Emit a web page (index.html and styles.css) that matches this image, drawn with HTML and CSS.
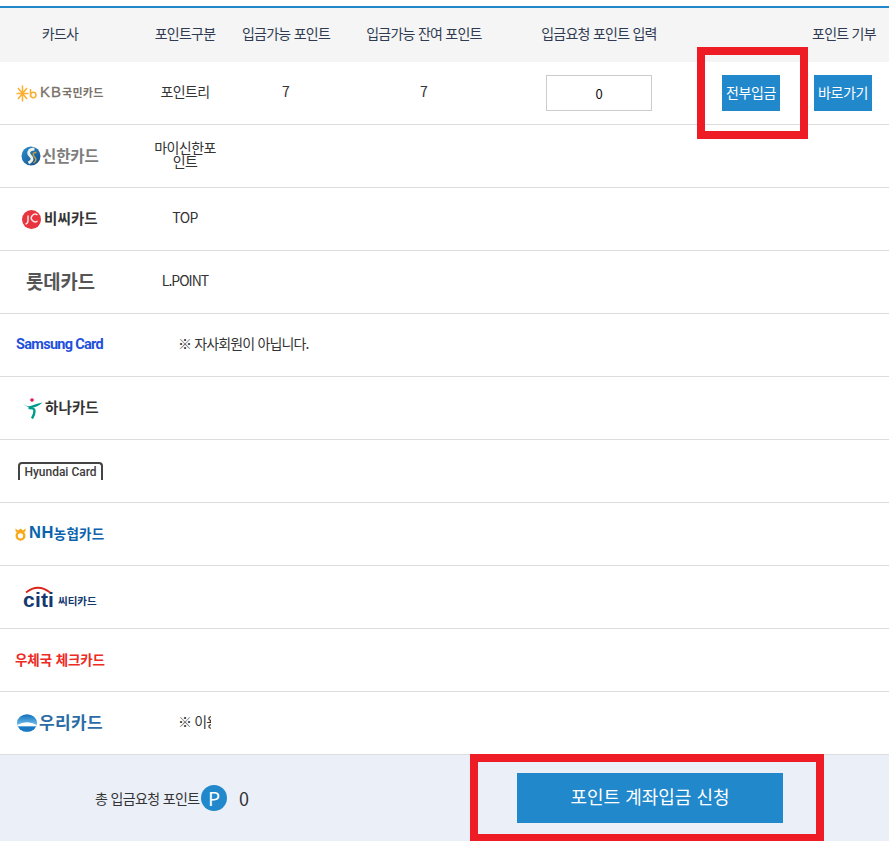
FILE: index.html
```html
<!DOCTYPE html>
<html lang="ko">
<head>
<meta charset="utf-8">
<title>포인트 계좌입금</title>
<link rel="stylesheet" href="styles.css">
</head>
<body>
<div class="page">
  <div class="row head">
    <div class="cell center">카드사</div>
    <div class="cell center">포인트구분</div>
    <div class="cell center wide">입금가능 포인트</div>
    <div class="cell center">입금가능 잔여 포인트</div>
    <div class="cell center">입금요청 포인트 입력</div>
    <div class="cell"></div>
    <div class="cell head-last">포인트 기부</div>
  </div>

  <div class="row">
    <div class="logo l-kb">
      <svg class="ic" width="21" height="17" viewBox="0 0 21 17"><path d="M6.500 0.500V16.500M0.500 8.500H12.500M2 3L11 14M11 3L2 14" stroke="#fbb034" stroke-width="1.500" fill="none"/><path d="M14.500 4V12" stroke="#fbb034" stroke-width="1.500" fill="none"/><circle cx="17.300" cy="10" r="2.700" fill="none" stroke="#fbb034" stroke-width="1.500"/></svg>
      <span class="kb-en">KB</span><span class="kb-ko">국민카드</span>
    </div>
    <div class="cell center type">포인트리</div>
    <div class="cell center num wide">7</div>
    <div class="cell center num">7</div>
    <div class="cell center"><input class="amount" type="text" value="0"></div>
    <div class="cell btn-a"><button class="btn">전부입금</button></div>
    <div class="cell btn-b"><button class="btn">바로가기</button></div>
  </div>

  <div class="row">
    <div class="logo l-sh">
      <svg class="ic" width="20" height="20" viewBox="0 0 20 20"><defs><linearGradient id="shg" x1="0" y1="0" x2="1" y2="1"><stop offset="0" stop-color="#2f8fd0"/><stop offset="1" stop-color="#0f4c86"/></linearGradient></defs><circle cx="10" cy="10" r="9.500" fill="url(#shg)"/><path d="M13.500 3C7.500 3 6.500 7 9 9.500S12.500 14 7.500 17" fill="none" stroke="#eef1e6" stroke-width="2.800"/><path d="M15.500 6.500C11.500 6 11.500 9 13.500 11S15.500 15 12.500 17" fill="none" stroke="#c09c4b" stroke-width="1.500"/></svg>
      <span>신한카드</span>
    </div>
    <div class="cell center type"><span class="wrap">마이신한포인트</span></div>
  </div>

  <div class="row">
    <div class="logo l-bc">
      <svg class="ic" width="19" height="19" viewBox="0 0 19 19"><circle cx="9.500" cy="9.500" r="9.500" fill="#e8343f"/><path d="M15.500 5A3.800 3.800 0 1 0 15.500 11" fill="none" stroke="#fbe3e3" stroke-width="1.500"/><path d="M6 5.500V10.500Q6 13.500 3.500 14" fill="none" stroke="#fbe3e3" stroke-width="1.500"/></svg>
      <span>비씨카드</span>
    </div>
    <div class="cell center type">TOP</div>
  </div>

  <div class="row">
    <div class="logo l-lotte"><span>롯데카드</span></div>
    <div class="cell center type latin">L.POINT</div>
  </div>

  <div class="row">
    <div class="logo l-ss"><span>Samsung Card</span></div>
    <div class="cell notice">※ 자사회원이 아닙니다.</div>
  </div>

  <div class="row">
    <div class="logo l-hana">
      <svg class="ic" width="21" height="21" viewBox="0 0 21 21"><circle cx="10" cy="2" r="1.800" fill="#e3165b"/><path d="M0.500 5.500Q5 9.500 10 7.500T20.500 4.500Q15 9.500 10 9.500T0.500 5.500Z" fill="#009b8c"/><path d="M6.500 10Q12.500 9.500 12.500 13T10 20.500" fill="none" stroke="#009b8c" stroke-width="2.400"/></svg>
      <span>하나카드</span>
    </div>
  </div>

  <div class="row">
    <div class="logo l-hd"><span>Hyundai Card</span></div>
  </div>

  <div class="row">
    <div class="logo l-nh">
      <svg class="ic" width="11" height="13" viewBox="0 0 11 13"><path d="M0.500 0.500L3 2.500L5.500 0.500L8 2.500L10.500 0.500V3L9 4.500H2L0.500 3Z" fill="#f9a81a"/><circle cx="5.500" cy="7.800" r="3.800" fill="none" stroke="#f9a81a" stroke-width="2.400"/></svg>
      <span class="nh-en">NH</span><span class="nh-ko">농협카드</span>
    </div>
  </div>

  <div class="row">
    <div class="logo l-citi">
      <span class="citi-wrap"><svg class="citi-arc" width="26" height="7" viewBox="0 0 26 7"><path d="M1 6.500Q13 -3 25 6.500" fill="none" stroke="#d9261c" stroke-width="1.800"/></svg><span class="citi-en">citi</span></span><span class="citi-ko">씨티카드</span>
    </div>
  </div>

  <div class="row">
    <div class="logo l-post"><span>우체국 체크카드</span></div>
  </div>

  <div class="row">
    <div class="logo l-woori">
      <svg class="ic" width="20" height="18" viewBox="0 0 20 18"><defs><clipPath id="wc"><ellipse cx="10" cy="9" rx="10" ry="8.800"/></clipPath><linearGradient id="wg" x1="0" y1="0" x2="0" y2="1"><stop offset="0" stop-color="#0e6db8"/><stop offset="0.500" stop-color="#5fb0e4"/></linearGradient></defs><g clip-path="url(#wc)"><rect width="20" height="18" fill="url(#wg)"/><path d="M0 11Q10 5.500 20 11V12.500H0Z" fill="#fff"/><path d="M0 12.500H20V18H0Z" fill="#1b78c2"/></g></svg>
      <span>우리카드</span>
    </div>
    <div class="cell"><div class="notice clip">※ 이용</div></div>
  </div>

  <div class="total">
    <div class="sum">
      <span class="sum-label">총 입금요청 포인트</span>
      <span class="badge">P</span>
      <span class="sum-value">0</span>
    </div>
    <button class="submit">포인트 계좌입금 신청</button>
  </div>

  <div class="mark mark-a"></div>
  <div class="mark mark-b"></div>
</div>
</body>
</html>
```
FILE: styles.css
```css
html, body {
  margin: 0;
  padding: 0;
  background: #fff;
}
body {
  font-family: "Noto Sans CJK KR", "Noto Sans", sans-serif;
  color: #333;
  font-size: 14px;
}
.page {
  position: relative;
  width: 889px;
  height: 841px;
  overflow: hidden;
  padding-top: 6px;
  box-sizing: border-box;
}
.row {
  display: grid;
  grid-template-columns: 120px 130px 72px 204px 146px 130px 87px;
  height: 63px;
  box-sizing: border-box;
  border-bottom: 1px solid #dcdcdc;
  align-items: center;
}
.head {
  height: 56px;
  border-top: 2px solid #2288cc;
  border-bottom: 0;
  background: #f5f5f5;
  color: #2f3b52;
  padding-bottom: 5px;
  letter-spacing: -0.75px;
}
.cell { min-width: 0; }
.center { text-align: center; }
.wide { white-space: nowrap; margin: 0 -10px; }
.head-last { white-space: nowrap; padding-left: 10px; }
.type { letter-spacing: -0.6px; line-height: 14px; padding-bottom: 4px; }
.latin { letter-spacing: -1px; }
.wrap { display: block; width: 62px; margin: 0 auto; word-break: break-all; }
.num { padding-bottom: 4px; }
.amount {
  width: 106px;
  height: 36px;
  box-sizing: border-box;
  border: 1px solid #ccc;
  background: #fff;
  text-align: center;
  font: 13px "Noto Sans CJK KR", sans-serif;
  color: #111;
  padding: 0;
  display: block;
  margin: 0 auto;
}
.btn {
  display: block;
  width: 58px;
  height: 36px;
  padding: 0 0 3px;
  border: 0;
  background: #2288cc;
  color: #fff;
  font: 14px "Noto Sans CJK KR", sans-serif;
  letter-spacing: -0.4px;
  white-space: nowrap;
}
.btn-a { padding-left: 50px; }
.btn-b { padding-left: 12px; }
.logo {
  display: flex;
  align-items: center;
  white-space: nowrap;
  font-weight: 700;
  height: 100%;
}
.logo > span { margin-bottom: 3px; }
.ic { flex: none; display: block; }
.l-kb { padding-left: 16px; color: #7b7269; }
.kb-en { font-size: 15px; margin-left: 3px; font-family: "Liberation Sans", sans-serif; letter-spacing: 1px; font-weight: 400; -webkit-text-stroke: 0.3px #7b7269; }
.kb-ko { font-size: 11px; margin-left: 0; letter-spacing: 0.3px; }
.l-sh { padding-left: 21px; color: #7d7d7d; font-size: 15.500px; letter-spacing: -0.1px; }
.l-sh span { margin-left: 1px; }
.l-bc { padding-left: 22px; color: #333; font-size: 14.500px; letter-spacing: 0.1px; }
.l-bc span { margin-left: 3px; }
.l-lotte { padding-left: 26px; color: #555; font-size: 18.800px; }
.logo.l-ss { padding-left: 16px; color: #1f50dc; font: 700 14.500px "Roboto", sans-serif; letter-spacing: -0.7px; }
.logo.l-ss > span { margin-bottom: 1px; }
.l-hana { padding-left: 22px; color: #333; font-size: 14.500px; letter-spacing: 0.1px; }
.l-hana span { margin-left: 2px; }
.l-hd { padding-left: 18px; }
.logo.l-hd > span {
  margin: 0 0 1px;
  width: 85px;
  height: 18px;
  box-sizing: border-box;
  border: 2px solid #444;
  border-bottom: 0;
  border-radius: 4px 4px 0 0;
  color: #3c3c3c;
  font: 500 12px/17px "Roboto", sans-serif;
  text-align: center;
}
.l-nh { padding-left: 15px; color: #0b62ad; }
.nh-en { font: 700 16.500px "Liberation Sans", sans-serif; margin-left: 3px; letter-spacing: 0.5px; }
.nh-ko { font-size: 13.500px; margin-left: 0; letter-spacing: 0.2px; }
.l-citi { padding-left: 23px; color: #12386f; }
.logo > .citi-wrap { display: block; position: relative; width: 31px; height: 14px; margin: 6px 0 0; }
.citi-arc { position: absolute; left: 2px; top: -7px; }
.citi-en { display: block; font: 700 21px/14px "Liberation Sans", sans-serif; letter-spacing: 0.2px; }
.logo > .citi-ko { font-size: 10.500px; margin: 6px 0 0 4px; letter-spacing: 0; }
.l-post { padding-left: 15px; color: #ee2a24; font-size: 13.500px; letter-spacing: -0.1px; }
.l-woori { padding-left: 17px; color: #2b6ca6; font-size: 17px; letter-spacing: 0.4px; }
.l-woori span { margin-left: 2px; }
.notice {
  grid-column: 2 / span 4;
  padding: 0 0 4px 58px;
  letter-spacing: -0.85px;
  white-space: nowrap;
}
.clip {
  width: 33px;
  padding: 0 0 4px;
  margin-left: 58px;
  letter-spacing: -0.85px;
  overflow: hidden;
}
.total {
  display: flex;
  align-items: center;
  height: 86px;
  background: #eaeff8;
}
.sum {
  display: flex;
  align-items: center;
  padding-left: 95px;
  width: 517px;
  flex: none;
  box-sizing: border-box;
}
.sum-label { letter-spacing: -0.65px; white-space: nowrap; width: 106px; }
.badge {
  width: 26px;
  height: 26px;
  border-radius: 50%;
  background: #2288cc;
  color: #fff;
  font-size: 19px;
  line-height: 26px;
  text-align: center;
}
.sum-value { margin-left: 12px; font-size: 18px; }
.submit {
  width: 266px;
  height: 50px;
  border: 0;
  padding: 0 0 4px;
  background: #2288cc;
  color: #fff;
  font: 18px "Noto Sans CJK KR", sans-serif;
  letter-spacing: 0;
}
.mark {
  position: absolute;
  box-sizing: border-box;
  border: 8px solid #ee1c25;
}
.mark-a { left: 697px; top: 47px; width: 111px; height: 92px; }
.mark-b { left: 470px; top: 754px; width: 354px; height: 88px; }
```
